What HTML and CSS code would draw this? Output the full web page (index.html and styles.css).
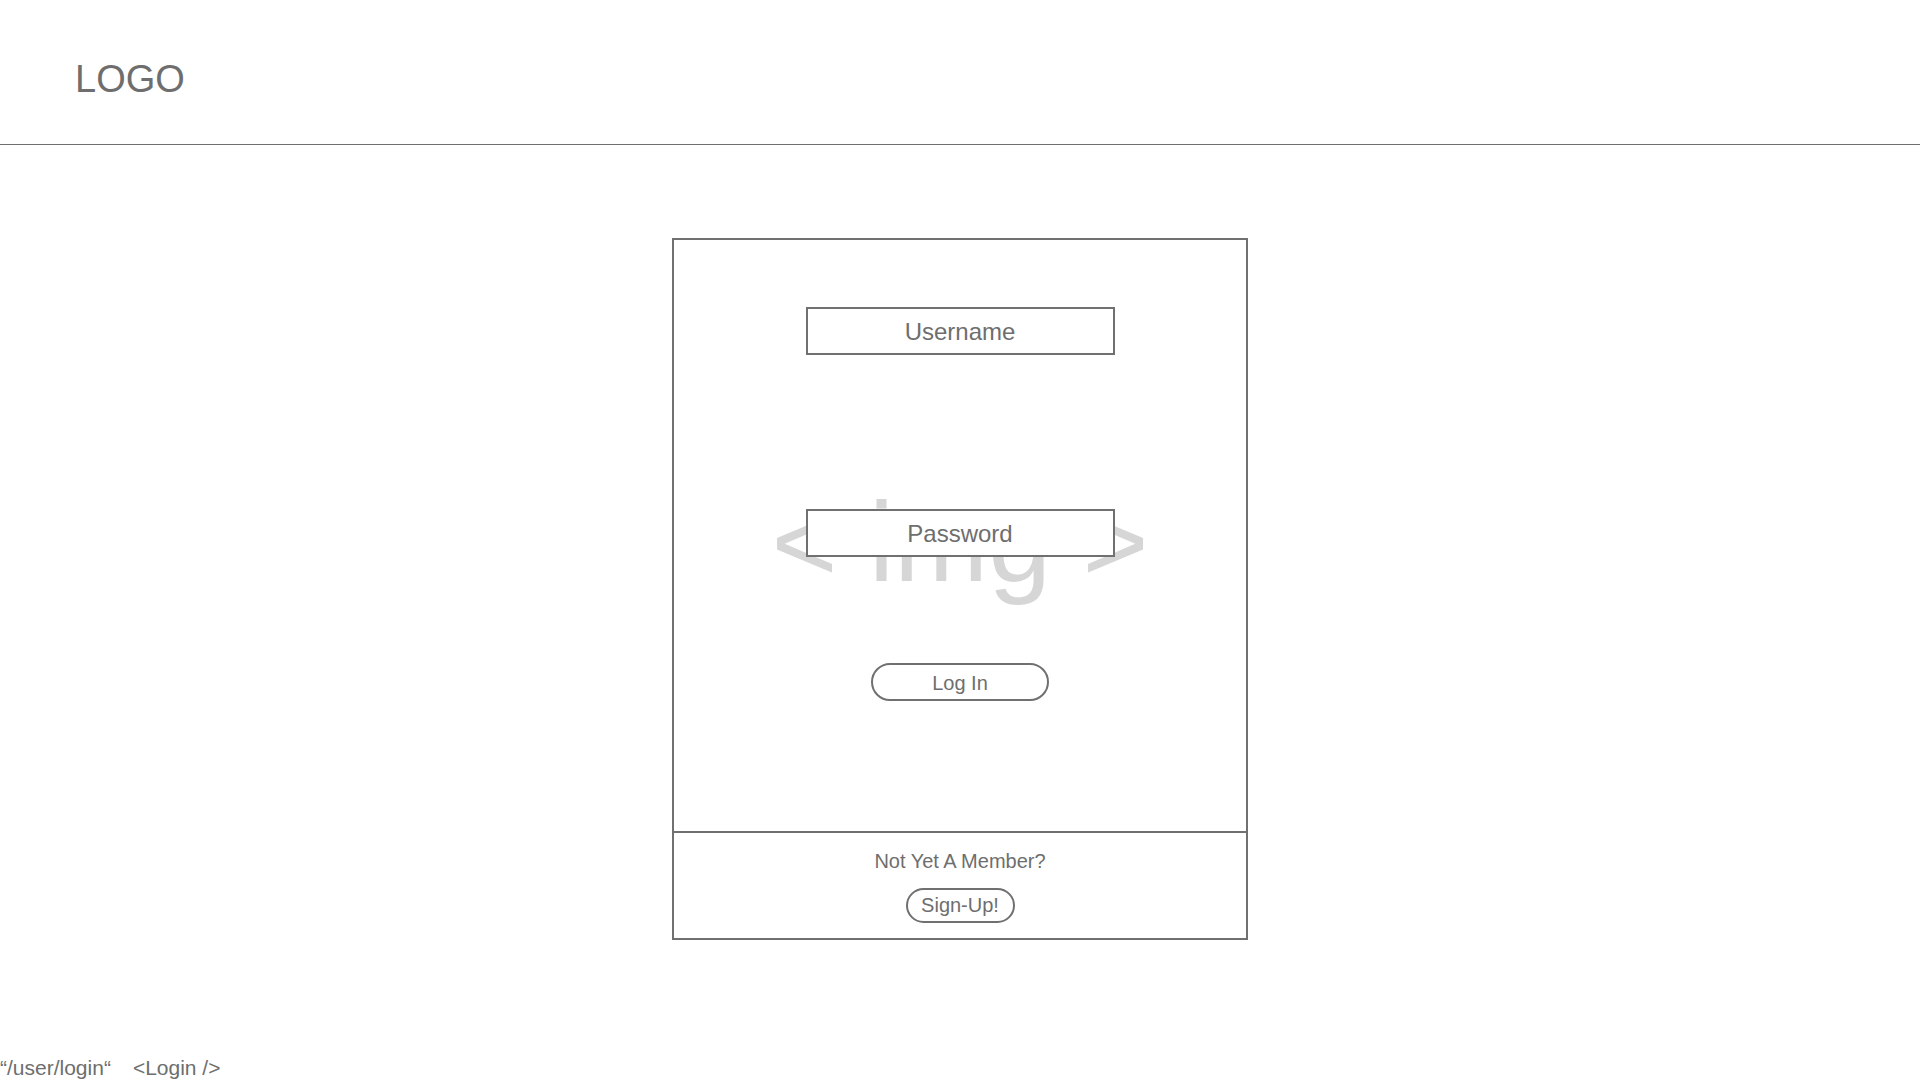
FILE: index.html
```html
<!DOCTYPE html>
<html lang="en">
<head>
    <meta charset="UTF-8">
    <meta name="viewport" content="width=device-width, initial-scale=1.0">
    <title>Login</title>
    <link rel="stylesheet" href="styles.css">
</head>
<body>
    <header class="top-bar">
        <div class="logo">LOGO</div>
    </header>

    <main class="page">
        <div class="login-card">
            <div class="login-form">
                <!-- image placeholder sits behind the fields -->
                <div class="img-placeholder">&lt; img &gt;</div>
                <div class="field">Username</div>
                <div class="field field-password">Password</div>
                <button class="btn btn-login">Log In</button>
            </div>
            <div class="signup">
                <p>Not Yet A Member?</p>
                <button class="btn btn-signup">Sign-Up!</button>
            </div>
        </div>
    </main>

    <footer class="route-info">
        <span>“/user/login“</span>
        <span>&lt;Login /&gt;</span>
    </footer>
</body>
</html>
```

FILE: styles.css
```css
* {
    margin: 0;
    padding: 0;
    box-sizing: border-box;
}

body {
    font-family: "Liberation Sans", Arial, sans-serif;
    background-color: #fff;
    color: #6e6e6e;
    display: flex;
    flex-direction: column;
    min-height: 100vh;
}

.top-bar {
    height: 145px;
    border-bottom: 1px solid #707070;
    padding-top: 60px;
    padding-left: 75px;
}

.logo {
    font-size: 38px;
    line-height: 38px;
    color: #6e6e6e;
}

.page {
    padding-top: 93px;
}

.login-card {
    width: 576px;
    margin: 0 auto;
    border: 2px solid #707070;
}

.login-form {
    position: relative;
    display: flex;
    flex-direction: column;
    align-items: center;
    padding: 67px 0 130px;
    border-bottom: 2px solid #707070;
}

.img-placeholder {
    position: absolute;
    top: 246px;
    left: 0;
    right: 0;
    text-align: center;
    font-size: 113px;
    line-height: 113px;
    color: #d6d6d6;
}

.field {
    position: relative;
    width: 309px;
    height: 48px;
    border: 2px solid #707070;
    background-color: #fff;
    font-size: 24px;
    display: flex;
    align-items: center;
    justify-content: center;
    padding-top: 2px;
}

.field-password {
    margin-top: 154px;
}

.btn {
    position: relative;
    font-family: inherit;
    color: #6e6e6e;
    background-color: #fff;
    border: 2px solid #707070;
    font-size: 20px;
    cursor: pointer;
}

.btn-login {
    margin-top: 106px;
    width: 178px;
    height: 38px;
    border-radius: 19px;
    padding-top: 2px;
}

.signup {
    display: flex;
    flex-direction: column;
    align-items: center;
    padding: 16px 0 15px;
}

.signup p {
    font-size: 20px;
    line-height: 24px;
}

.btn-signup {
    margin-top: 15px;
    width: 109px;
    height: 35px;
    border-radius: 18px;
}

.route-info {
    margin-top: auto;
    display: flex;
    gap: 22px;
    font-size: 21px;
    line-height: 24px;
}
```
